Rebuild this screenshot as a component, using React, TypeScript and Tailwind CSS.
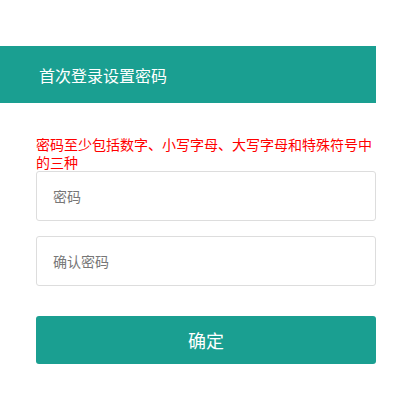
export default function App() {
  return (
    <div
      className="min-h-[414px] bg-white pt-[46px]"
      style={{ fontFamily: '"Noto Sans CJK SC", "Liberation Sans", sans-serif' }}
    >
      <div className="w-[376px]">
        {/* Header */}
        <div className="flex h-[57px] items-center bg-[#1a9f91] pl-[39px] text-[16px] text-white">
          首次登录设置密码
        </div>

        {/* Form */}
        <div className="pl-[36px] pt-[32px]">
          <p className="text-[14px] leading-[18px] text-[#ff0000]">
            密码至少包括数字、小写字母、大写字母和特殊符号中的三种
          </p>
          <div className="flex flex-col gap-[15px]">
            <input
              type="password"
              placeholder="密码"
              className="h-[50px] w-full rounded-[3px] border border-[#dddddd] px-[16px] text-[14px] outline-none placeholder:text-[#777777]"
            />
            <input
              type="password"
              placeholder="确认密码"
              className="h-[50px] w-full rounded-[3px] border border-[#dddddd] px-[16px] text-[14px] outline-none placeholder:text-[#777777]"
            />
          </div>
          <button className="mt-[30px] h-[48px] w-full rounded-[3px] bg-[#1a9f91] text-[18px] text-white">
            确定
          </button>
        </div>
      </div>
    </div>
  );
}
